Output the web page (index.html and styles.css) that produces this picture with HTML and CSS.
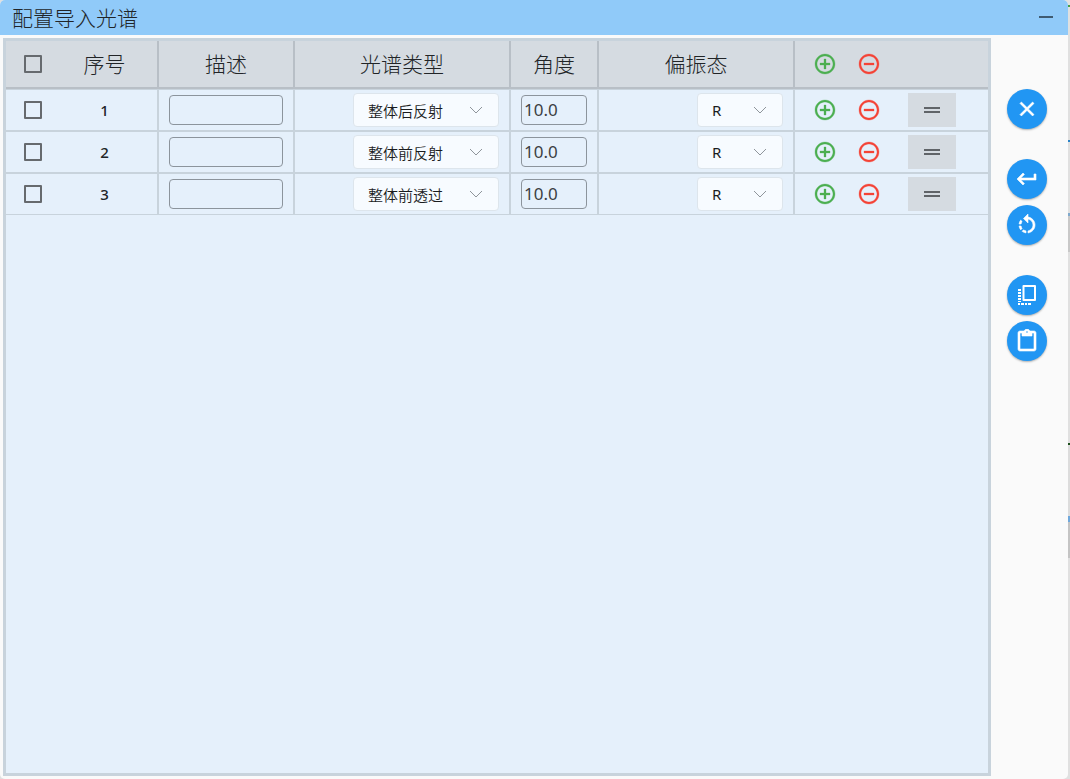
FILE: index.html
```
<!DOCTYPE html>
<html lang="zh-CN">
<head>
    <meta charset="UTF-8">
    <meta name="viewport" content="width=device-width, initial-scale=1.0">
    <title>配置导入光谱</title>
    <link rel="stylesheet" href="styles.css">
</head>
<body>
    <!-- Shared icons -->
    <svg class="sprite" aria-hidden="true">
        <symbol id="icon-add" viewBox="0 0 24 24">
            <path d="M13 7h-2v4H7v2h4v4h2v-4h4v-2h-4V7zm-1-5C6.48 2 2 6.48 2 12s4.48 10 10 10 10-4.48 10-10S17.52 2 12 2zm0 18c-4.41 0-8-3.59-8-8s3.59-8 8-8 8 3.59 8 8-3.59 8-8 8z"/>
        </symbol>
        <symbol id="icon-remove" viewBox="0 0 24 24">
            <path d="M7 11v2h10v-2H7zm5-9C6.48 2 2 6.48 2 12s4.48 10 10 10 10-4.48 10-10S17.52 2 12 2zm0 18c-4.41 0-8-3.59-8-8s3.59-8 8-8 8 3.59 8 8-3.59 8-8 8z"/>
        </symbol>
        <symbol id="icon-drag" viewBox="0 0 24 24">
            <path d="M20 9H4v2h16V9zM4 15h16v-2H4v2z"/>
        </symbol>
        <symbol id="icon-chevron" viewBox="0 0 14 8">
            <path d="M1 1l6 6 6-6" fill="none" stroke="currentColor"/>
        </symbol>
    </svg>

    <div class="window">
        <header class="title-bar">
            <h1>配置导入光谱</h1>
            <button type="button" class="minimize" aria-label="最小化">
                <svg class="icon" viewBox="0 0 24 24"><path d="M19 13H5v-2h14v2z"/></svg>
            </button>
        </header>

        <div class="window-body">
            <main class="table-panel">
                <table class="spectrum-table">
                    <colgroup>
                        <col class="col-index">
                        <col class="col-desc">
                        <col class="col-type">
                        <col class="col-angle">
                        <col class="col-polar">
                        <col>
                    </colgroup>
                    <thead>
                        <tr>
                            <th>
                                <div class="index-cell">
                                    <input type="checkbox" aria-label="全选">
                                    <span>序号</span>
                                </div>
                            </th>
                            <th>描述</th>
                            <th>光谱类型</th>
                            <th>角度</th>
                            <th>偏振态</th>
                            <th>
                                <div class="actions">
                                    <button type="button" class="add" aria-label="添加"><svg class="icon"><use href="#icon-add"/></svg></button>
                                    <button type="button" class="remove" aria-label="删除"><svg class="icon"><use href="#icon-remove"/></svg></button>
                                </div>
                            </th>
                        </tr>
                    </thead>
                    <tbody>
                        <tr>
                            <td>
                                <div class="index-cell">
                                    <input type="checkbox" aria-label="选择第1行">
                                    <span>1</span>
                                </div>
                            </td>
                            <td><input type="text" class="text-box" aria-label="描述"></td>
                            <td>
                                <div class="select-box type-select">
                                    <select aria-label="光谱类型">
                                        <option selected>整体后反射</option>
                                        <option>整体前反射</option>
                                        <option>整体前透过</option>
                                    </select>
                                    <svg class="chevron"><use href="#icon-chevron"/></svg>
                                </div>
                            </td>
                            <td><input type="text" class="text-box" value="10.0" aria-label="角度"></td>
                            <td>
                                <div class="select-box polar-select">
                                    <select aria-label="偏振态">
                                        <option>R</option>
                                    </select>
                                    <svg class="chevron"><use href="#icon-chevron"/></svg>
                                </div>
                            </td>
                            <td>
                                <div class="actions">
                                    <button type="button" class="add" aria-label="添加"><svg class="icon"><use href="#icon-add"/></svg></button>
                                    <button type="button" class="remove" aria-label="删除"><svg class="icon"><use href="#icon-remove"/></svg></button>
                                    <button type="button" class="drag" aria-label="拖动"><svg class="icon"><use href="#icon-drag"/></svg></button>
                                </div>
                            </td>
                        </tr>
                        <tr>
                            <td>
                                <div class="index-cell">
                                    <input type="checkbox" aria-label="选择第2行">
                                    <span>2</span>
                                </div>
                            </td>
                            <td><input type="text" class="text-box" aria-label="描述"></td>
                            <td>
                                <div class="select-box type-select">
                                    <select aria-label="光谱类型">
                                        <option>整体后反射</option>
                                        <option selected>整体前反射</option>
                                        <option>整体前透过</option>
                                    </select>
                                    <svg class="chevron"><use href="#icon-chevron"/></svg>
                                </div>
                            </td>
                            <td><input type="text" class="text-box" value="10.0" aria-label="角度"></td>
                            <td>
                                <div class="select-box polar-select">
                                    <select aria-label="偏振态">
                                        <option>R</option>
                                    </select>
                                    <svg class="chevron"><use href="#icon-chevron"/></svg>
                                </div>
                            </td>
                            <td>
                                <div class="actions">
                                    <button type="button" class="add" aria-label="添加"><svg class="icon"><use href="#icon-add"/></svg></button>
                                    <button type="button" class="remove" aria-label="删除"><svg class="icon"><use href="#icon-remove"/></svg></button>
                                    <button type="button" class="drag" aria-label="拖动"><svg class="icon"><use href="#icon-drag"/></svg></button>
                                </div>
                            </td>
                        </tr>
                        <tr>
                            <td>
                                <div class="index-cell">
                                    <input type="checkbox" aria-label="选择第3行">
                                    <span>3</span>
                                </div>
                            </td>
                            <td><input type="text" class="text-box" aria-label="描述"></td>
                            <td>
                                <div class="select-box type-select">
                                    <select aria-label="光谱类型">
                                        <option>整体后反射</option>
                                        <option>整体前反射</option>
                                        <option selected>整体前透过</option>
                                    </select>
                                    <svg class="chevron"><use href="#icon-chevron"/></svg>
                                </div>
                            </td>
                            <td><input type="text" class="text-box" value="10.0" aria-label="角度"></td>
                            <td>
                                <div class="select-box polar-select">
                                    <select aria-label="偏振态">
                                        <option>R</option>
                                    </select>
                                    <svg class="chevron"><use href="#icon-chevron"/></svg>
                                </div>
                            </td>
                            <td>
                                <div class="actions">
                                    <button type="button" class="add" aria-label="添加"><svg class="icon"><use href="#icon-add"/></svg></button>
                                    <button type="button" class="remove" aria-label="删除"><svg class="icon"><use href="#icon-remove"/></svg></button>
                                    <button type="button" class="drag" aria-label="拖动"><svg class="icon"><use href="#icon-drag"/></svg></button>
                                </div>
                            </td>
                        </tr>
                    </tbody>
                </table>
            </main>

            <aside class="toolbar">
                <div class="tool-group">
                    <button type="button" class="fab" aria-label="关闭">
                        <svg class="icon" viewBox="0 0 24 24"><path d="M19 6.41L17.59 5 12 10.59 6.41 5 5 6.41 10.59 12 5 17.59 6.41 19 12 13.41 17.59 19 19 17.59 13.41 12z"/></svg>
                    </button>
                </div>
                <div class="tool-group">
                    <button type="button" class="fab" aria-label="确定">
                        <svg class="icon" viewBox="0 0 24 24"><path d="M19 7v4H5.83l3.58-3.59L8 6l-6 6 6 6 1.41-1.41L5.83 13H21V7z"/></svg>
                    </button>
                    <button type="button" class="fab" aria-label="重置">
                        <svg class="icon" viewBox="0 0 24 24"><path d="M7.11 8.53L5.7 7.11C4.8 8.27 4.24 9.61 4.07 11h2.02c.14-.87.49-1.72 1.02-2.47zM6.09 13H4.07c.17 1.39.72 2.73 1.62 3.89l1.41-1.42c-.52-.75-.87-1.59-1.01-2.47zm1.01 5.32c1.16.9 2.51 1.44 3.9 1.61V17.9c-.87-.15-1.71-.49-2.46-1.03L7.1 18.32zM13 4.07V1L8.45 5.55 13 10V6.09c2.84.48 5 2.94 5 5.91s-2.16 5.43-5 5.91v2.02c3.95-.49 7-3.85 7-7.93s-3.05-7.44-7-7.93z"/></svg>
                    </button>
                </div>
                <div class="tool-group">
                    <button type="button" class="fab" aria-label="复制">
                        <svg class="icon dotted" viewBox="0 0 24 24">
                            <path d="M8.500 3h11.500v14h-11.500z" fill="none" stroke="currentColor" stroke-width="2" stroke-linejoin="round"/>
                            <path d="M3 6h3v2H3zM3 9h3v2H3zM3 12h3v2H3zM3 15h3v2H3zM3 18h3v1H3zM3 20h2v2H3zM6 20h3v2H6zM10 20h2v2h-2zM13 20h3v2h-3z"/>
                        </svg>
                    </button>
                    <button type="button" class="fab" aria-label="粘贴">
                        <svg class="icon" viewBox="0 0 24 24"><path d="M19 2h-4.180C14.400.840 13.300 0 12 0c-1.300 0-2.400.840-2.820 2H5c-1.100 0-2 .9-2 2v16c0 1.100.9 2 2 2h14c1.100 0 2-.9 2-2V4c0-1.100-.9-2-2-2zm-7 0c.55 0 1 .45 1 1s-.45 1-1 1-1-.45-1-1 .45-1 1-1zm7 18H5V4h2v3h10V4h2v16z"/></svg>
                    </button>
                </div>
            </aside>
        </div>
    </div>
</body>
</html>
```
FILE: styles.css
```
* {
    margin: 0;
    padding: 0;
    box-sizing: border-box;
}

body {
    min-height: 100vh;
    display: flex;
    padding-right: 2px;
    background: linear-gradient(
        #e0e0e0 5px, #43a047 5px 7px,
        #e0e0e0 7px 140px, #2b84c8 140px 142px,
        #e0e0e0 142px 213px, #7fa9cc 213px 216px,
        #c8c8c8 216px 252px, #e0e0e0 252px 443px,
        #1b4d1b 443px 445px, #dcdcdc 445px 516px,
        #6fa8dc 516px 522px, #c4c4c4 522px 558px,
        #e0e0e0 558px
    );
    color: #212427;
    font-family: "Noto Sans", "Noto Sans CJK SC", sans-serif;
    font-size: 15px;
}

button {
    border: none;
    background: none;
    cursor: pointer;
}

.sprite {
    position: absolute;
    width: 0;
    height: 0;
}

.icon {
    display: block;
    width: 24px;
    height: 24px;
    fill: currentColor;
}

.window {
    flex: 1;
    display: flex;
    flex-direction: column;
    background-color: #fafafa;
    border-radius: 5px;
    overflow: hidden;
}

.title-bar {
    display: flex;
    justify-content: space-between;
    align-items: center;
    height: 35px;
    padding: 0 10px 2px 12px;
    background-color: #90caf9;
}

.title-bar h1 {
    font-family: "Noto Sans CJK SC", sans-serif;
    font-size: 21px;
    font-weight: 300;
    line-height: 32px;
}

.minimize {
    color: #3f5b72;
}

.window-body {
    flex: 1;
    display: flex;
    padding: 3px 0 3px 3px;
}

/* Table */
.table-panel {
    flex: 1;
    border: 3px solid #c8d3dc;
    background-color: #e5f0fb;
}

.spectrum-table {
    width: 100%;
    table-layout: fixed;
    border-collapse: separate;
    border-spacing: 0;
}

.col-index {
    width: 152px;
}

.col-desc {
    width: 136px;
}

.col-type {
    width: 216px;
}

.col-angle {
    width: 88px;
}

.col-polar {
    width: 196px;
}

.spectrum-table th {
    height: 48px;
    padding-bottom: 2px;
    background-color: #d5dbe1;
    border: 1px solid #b8bfc6;
    border-width: 0 1px 2px;
    font-family: "Noto Sans CJK SC", sans-serif;
    font-size: 21px;
    font-weight: 300;
    line-height: 32px;
}

.spectrum-table td {
    height: 42px;
    padding: 0 10px;
    border: 1px solid #c8d3dc;
}

.spectrum-table th:first-child,
.spectrum-table td:first-child {
    padding: 0 0 0 18px;
    border-left: none;
}

.spectrum-table th:last-child,
.spectrum-table td:last-child {
    padding: 0 0 0 18px;
    border-right: none;
}

.index-cell {
    display: flex;
    align-items: center;
    gap: 10px;
}

.index-cell span {
    flex: 1;
    text-align: center;
}

th .index-cell span {
    padding-bottom: 2px;
}

td .index-cell span {
    font-weight: 500;
}

input[type="checkbox"] {
    appearance: none;
    width: 18px;
    height: 18px;
    border: 2px solid #666a6e;
    border-radius: 1px;
}

input[type="checkbox"]:checked {
    background-color: #2196f3;
}

.text-box {
    display: block;
    width: 100%;
    height: 30px;
    padding: 0 2px 2px;
    border: 1px solid #8c949c;
    border-radius: 4px;
    background: none;
    color: #3c4043;
    font-family: inherit;
    font-size: 17px;
}

.select-box {
    position: relative;
    margin-left: auto;
}

.type-select {
    width: 146px;
}

.polar-select {
    width: 86px;
}

.select-box select {
    appearance: none;
    display: block;
    width: 100%;
    height: 34px;
    padding: 0 32px 0 14px;
    border: 1px solid #dde5ec;
    border-radius: 4px;
    background-color: #f7fbff;
    color: #1a1c1e;
    font-family: inherit;
    font-size: 15px;
}

.type-select select {
    font-family: "Noto Sans CJK SC", sans-serif;
    font-weight: 350;
}

.chevron {
    position: absolute;
    top: 13px;
    right: 16px;
    width: 14px;
    height: 8px;
    color: #8f959b;
    pointer-events: none;
}

.actions {
    display: flex;
    align-items: center;
    gap: 20px;
}

.add .icon,
.remove .icon {
    stroke: currentColor;
    stroke-width: 0.3;
}

.add {
    color: #4caf50;
}

.remove {
    color: #f44336;
}

.drag {
    height: 34px;
    margin-left: 7px;
    padding: 0 12px;
    background-color: #d5dbe1;
    color: #606468;
}

/* Side buttons */
.toolbar {
    width: 77px;
    display: flex;
    flex-direction: column;
    align-items: center;
    gap: 30px;
    padding: 51px 5px 0 0;
}

.tool-group {
    display: flex;
    flex-direction: column;
    gap: 6px;
}

.fab {
    display: flex;
    align-items: center;
    justify-content: center;
    width: 40px;
    height: 40px;
    border-radius: 50%;
    background-color: #2196f3;
    box-shadow: 0 1px 2px rgba(0, 0, 0, 0.3);
    color: #fff;
}

.fab .icon {
    stroke: currentColor;
    stroke-width: 0.6;
}

.fab .dotted {
    stroke: none;
}
```
